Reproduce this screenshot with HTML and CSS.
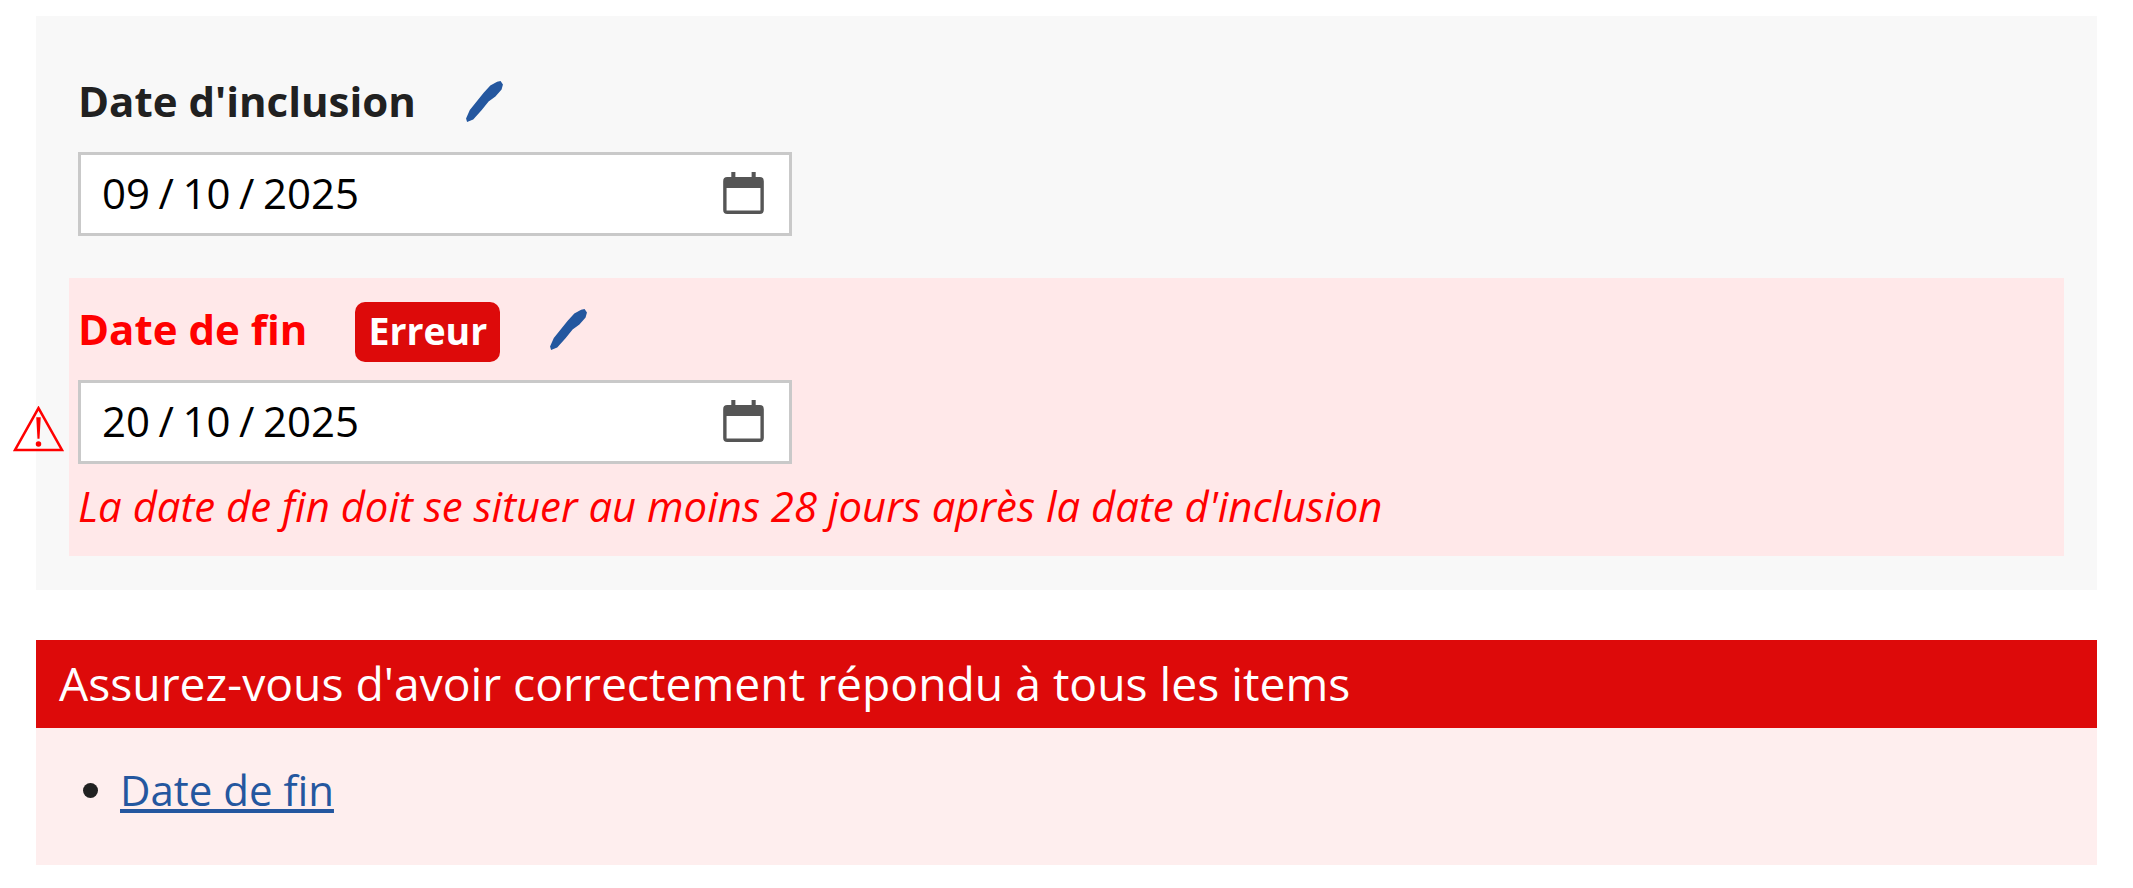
FILE: index.html
```html
<!DOCTYPE html>
<html lang="fr">
<head>
    <meta charset="UTF-8">
    <meta name="viewport" content="width=device-width, initial-scale=1.0">
    <title>Date d'inclusion</title>
    <link rel="stylesheet" href="styles.css">
</head>
<body>
    <div class="container">
        <div class="form-panel">
            <div class="field">
                <div class="field-label">
                    <span class="label-text">Date d'inclusion</span>
                    <svg class="pen" viewBox="79 65 108 120"><path d="M180 65 187 75 183 90 165 110 145 125 125 150 100 178 82 185 79 175 90 150 110 125 130 100 150 78 170 67Z"/></svg>
                </div>
                <div class="date-input">
                    <input type="text" value="09 / 10 / 2025">
                    <svg class="calendar" viewBox="0 0 120 124"><path d="M24 0h12v15h48V0h12v15h12a12 12 0 0 1 12 12v85a12 12 0 0 1-12 12H12a12 12 0 0 1-12-12V27a12 12 0 0 1 12-12h12ZM10 47v67h100V47Z"/></svg>
                </div>
            </div>

            <div class="field field-error">
                <svg class="warning" viewBox="0 0 50 45"><path class="warning-edge" d="M25 2 48 43H2Z"/><path class="warning-mark" d="M22.800 11h4.400l-1.200 21h-2ZM25 34.500a2.700 2.700 0 1 1 0 5.400 2.700 2.700 0 0 1 0-5.400Z"/></svg>
                <div class="field-label">
                    <span class="label-text">Date de fin</span>
                    <span class="badge">Erreur</span>
                    <svg class="pen" viewBox="79 65 108 120"><path d="M180 65 187 75 183 90 165 110 145 125 125 150 100 178 82 185 79 175 90 150 110 125 130 100 150 78 170 67Z"/></svg>
                </div>
                <div class="date-input">
                    <input type="text" value="20 / 10 / 2025">
                    <svg class="calendar" viewBox="0 0 120 124"><path d="M24 0h12v15h48V0h12v15h12a12 12 0 0 1 12 12v85a12 12 0 0 1-12 12H12a12 12 0 0 1-12-12V27a12 12 0 0 1 12-12h12ZM10 47v67h100V47Z"/></svg>
                </div>
                <p class="error-message">La date de fin doit se situer au moins 28 jours après la date d'inclusion</p>
            </div>
        </div>

        <div class="error-summary">
            <div class="summary-title">Assurez-vous d'avoir correctement répondu à tous les items</div>
            <ul class="summary-list">
                <li><a href="#">Date de fin</a></li>
            </ul>
        </div>
    </div>
</body>
</html>
```

FILE: styles.css
```css
body {
    font-family: "Open Sans", "Noto Sans", sans-serif;
    margin: 0;
    padding: 0;
    background: #fff;
    color: #212121;
}

.container {
    padding: 16px 36px 0;
}

.form-panel {
    background-color: #f8f8f8;
    height: 574px;
    box-sizing: border-box;
    padding: 58px 33px 0;
}

.field {
    padding: 0 9px;
}

.field-label {
    display: flex;
    align-items: center;
    height: 60px;
    margin-bottom: 18px;
    gap: 50px;
}

.label-text {
    font-size: 42px;
    font-weight: 700;
    margin-bottom: 7px;
}

.pen {
    width: 37px;
    height: 41px;
    margin-bottom: 5px;
    fill: #24579f;
}

.date-input {
    display: flex;
    align-items: center;
    width: 714px;
    height: 84px;
    box-sizing: border-box;
    border: 3px solid #c9c9c9;
    background-color: #fff;
    padding: 0 25px 0 21px;
}

.date-input input {
    flex: 1;
    min-width: 0;
    border: none;
    padding: 0 0 3px;
    outline: none;
    background: transparent;
    font-family: inherit;
    font-size: 42px;
    word-spacing: -2.400px;
    color: #000;
}

.calendar {
    width: 41px;
    height: 42px;
    margin-bottom: 3px;
    fill: #555;
}

.field-error {
    position: relative;
    height: 278px;
    box-sizing: border-box;
    margin-top: 42px;
    padding-top: 24px;
    background-color: #ffe8e9;
    color: #f00;
}

.warning {
    position: absolute;
    left: -56px;
    top: 128px;
    width: 51px;
    height: 46px;
}

.warning-edge {
    fill: none;
    stroke: #f00;
    stroke-width: 2.500;
}

.warning-mark {
    fill: #f00;
}

.badge {
    background-color: #dd0a0a;
    color: #fff;
    font-size: 37.500px;
    font-weight: 700;
    line-height: 58px;
    padding: 0 13px 2px;
    margin-left: -2px;
    border-radius: 10px;
}

.error-message {
    margin: 20px 0 0;
    font-size: 41.900px;
    font-style: italic;
    line-height: 44px;
}

.error-summary {
    margin-top: 50px;
    background-color: #feeeee;
    height: 225px;
}

.summary-title {
    background-color: #dd0a0a;
    color: #fff;
    font-size: 46.250px;
    line-height: 87px;
    padding: 0 0 1px 23px;
}

.summary-list {
    margin: 0;
    padding: 40px 0 0 84px;
    font-size: 42px;
    line-height: 44px;
}

.summary-list a {
    color: #24579f;
}
```
